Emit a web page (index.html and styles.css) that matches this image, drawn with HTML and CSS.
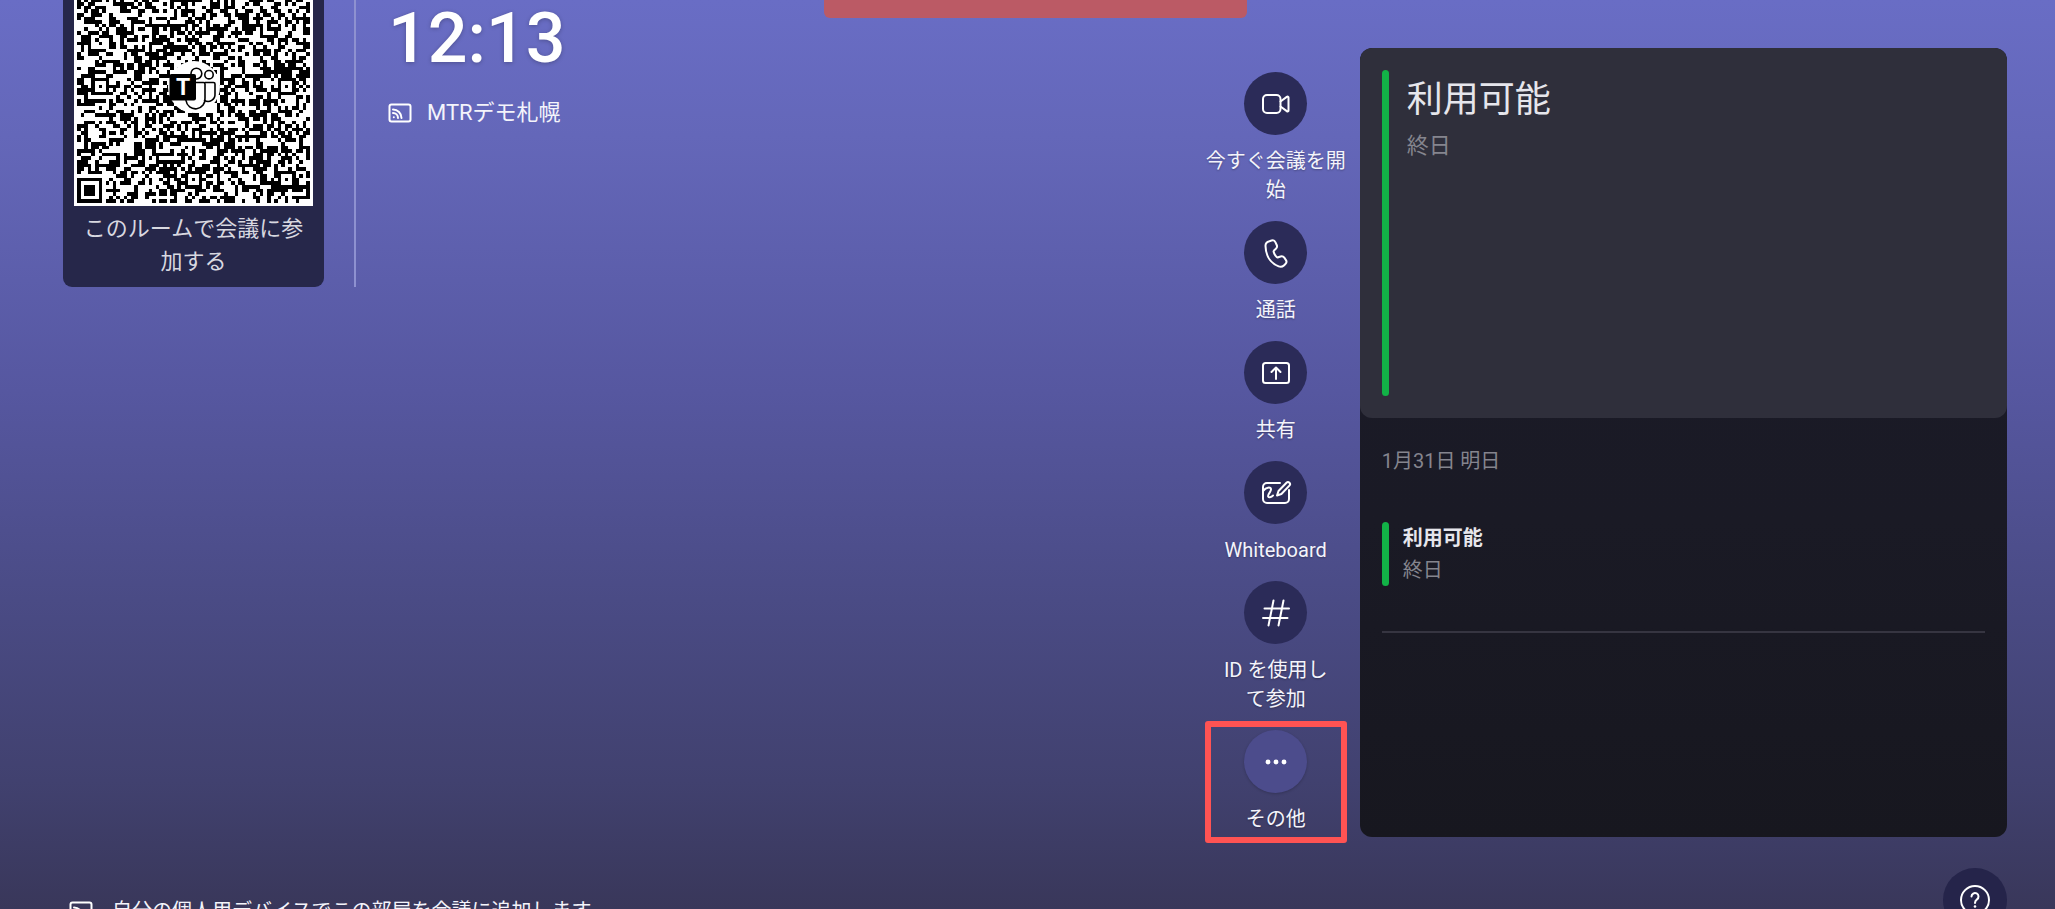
FILE: index.html
```html
<!DOCTYPE html>
<html lang="ja">
<head>
    <meta charset="UTF-8">
    <meta name="viewport" content="width=device-width, initial-scale=1.0">
    <title>MTRデモ札幌</title>
    <link rel="stylesheet" href="styles.css">
</head>
<body>

    <div class="alert-bar"></div>

    <main>
        <!-- Room info -->
        <section class="room">
            <div class="qr-card">
                <div class="qr-box">
                    <svg class="qr" id="qr" viewBox="0 0 65 65" shape-rendering="crispEdges"></svg>
                    <svg class="qr-logo" viewBox="-26 -26 52 52">
                        <circle r="26" fill="#fff"/>
                        <g fill="none" stroke="#000" stroke-width="1.6">
                            <circle cx="2.4" cy="-13.4" r="5.4"/>
                            <circle cx="15" cy="-12.3" r="4.2"/>
                            <path d="M2 -4.500H9.500Q11 -4.500 11 -3V11A9.500 9.500 0 0 1 -8 13.500"/>
                            <path d="M11 -4.500H19.500Q21 -4.500 21 -3V7A7 7 0 0 1 10.500 13.500"/>
                        </g>
                        <rect x="-24.500" y="-13" width="26.500" height="26.500" rx="2" fill="#000"/>
                        <text class="qr-logo-text" x="-11" y="8" text-anchor="middle">T</text>
                    </svg>
                </div>
                <p class="qr-caption">このルームで会議に参加する</p>
            </div>
            <div class="room-info">
                <h1 class="clock">12:13</h1>
                <p class="room-name">
                    <svg class="cast" viewBox="0 0 24 24">
                        <rect x="1.500" y="3.500" width="21" height="17" rx="2"/>
                        <path d="M5 8.500a8.500 8.500 0 0 1 8.500 8.500M5 12a5 5 0 0 1 5 5"/>
                        <circle cx="5.800" cy="16.200" r="1"/>
                    </svg>
                    <span>MTRデモ札幌</span>
                </p>
            </div>
        </section>

        <!-- Actions -->
        <nav class="actions">
            <button class="action">
                <span class="action-icon">
                    <svg viewBox="0 0 32 32">
                        <rect x="3" y="7" width="17.500" height="18" rx="4"/>
                        <path d="M20.500 13.500l6.300-4.600c.8-.6 1.700-.2 1.700.7v12.800c0 .9-.9 1.300-1.700.7l-6.300-4.600"/>
                    </svg>
                </span>
                <span class="action-label">今すぐ会議を開始</span>
            </button>
            <button class="action">
                <span class="action-icon">
                    <svg viewBox="0 0 32 32">
                        <path d="M9.400 4.200l2.200-.7c1.600-.5 3.200.3 3.900 1.800l1.200 2.700c.6 1.300.3 2.800-.8 3.800l-1.900 1.800c-.4.400-.5.900-.3 1.400.5 1.900 1.500 3.600 3 5 .4.400 1 .5 1.500.3l2.400-.8c1.400-.4 2.800 0 3.700 1.200l1.500 2.100c.9 1.300.8 3.100-.4 4.200l-1.500 1.400c-1.400 1.300-3.400 1.700-5.200 1-8.500-3.300-13-11.200-13.200-20.300-.1-2.200 1.300-4.200 3.900-4.900z"/>
                    </svg>
                </span>
                <span class="action-label">通話</span>
            </button>
            <button class="action">
                <span class="action-icon">
                    <svg viewBox="0 0 32 32">
                        <rect x="3" y="6" width="26" height="20" rx="2.500"/>
                        <path d="M16 22V11M11.500 15l4.500-4.500 4.500 4.500"/>
                    </svg>
                </span>
                <span class="action-label">共有</span>
            </button>
            <button class="action">
                <span class="action-icon">
                    <svg viewBox="0 0 32 32">
                        <path d="M20 6H7a4 4 0 0 0-4 4v12a4 4 0 0 0 4 4h18a4 4 0 0 0 4-4V13"/>
                        <path d="M3.500 13.500c2.500-3 7-4 7.500-1.500.5 2.500-3.800 5.500-2.800 7.500.9 1.700 3.300.3 4.800-1"/>
                        <path d="M17 18.500l1.500-4.500 8-8.300a2 2 0 0 1 2.900 2.900l-8 8.400z"/>
                    </svg>
                </span>
                <span class="action-label">Whiteboard</span>
            </button>
            <button class="action">
                <span class="action-icon">
                    <svg viewBox="0 0 32 32">
                        <path d="M13.500 3.500l-5 25M23.500 3.500l-5 25M4.500 11.500h24.500M3 21h24.500"/>
                    </svg>
                </span>
                <span class="action-label">ID を使用し<br>て参加</span>
            </button>
            <button class="action action-more">
                <span class="action-icon">
                    <svg viewBox="0 0 32 32">
                        <circle class="dot" cx="8" cy="16" r="2.400"/>
                        <circle class="dot" cx="16" cy="16" r="2.400"/>
                        <circle class="dot" cx="24" cy="16" r="2.400"/>
                    </svg>
                </span>
                <span class="action-label">その他</span>
            </button>
        </nav>

        <!-- Calendar -->
        <section class="calendar">
            <div class="today">
                <div class="today-text">
                    <h2>利用可能</h2>
                    <p>終日</p>
                </div>
            </div>
            <div class="upcoming">
                <p class="date">1月31日 明日</p>
                <div class="event">
                    <div class="event-text">
                        <h3>利用可能</h3>
                        <p>終日</p>
                    </div>
                </div>
                <hr>
            </div>
        </section>
    </main>

    <!-- Footer -->
    <footer>
        <p class="hint">
            <svg class="cast" viewBox="0 0 24 24">
                <rect x="1.500" y="3.500" width="21" height="17" rx="2"/>
                <path d="M5 8.500a8.500 8.500 0 0 1 8.500 8.500M5 12a5 5 0 0 1 5 5"/>
                <circle cx="5.800" cy="16.200" r="1"/>
            </svg>
            <span>自分の個人用デバイスでこの部屋を会議に追加します</span>
        </p>
        <button class="help" aria-label="ヘルプ">
            <svg viewBox="0 0 32 32">
                <circle cx="16" cy="16" r="14"/>
                <path d="M12.500 12.500a3.500 3.500 0 1 1 5.500 2.900c-1.300.9-2 1.600-2 3.600"/>
                <circle class="dot" cx="16" cy="22.500" r="1.300"/>
            </svg>
        </button>
    </footer>

    <script src="qr.js"></script>
</body>
</html>
```

FILE: styles.css
```css
/* General */
* {
    box-sizing: border-box;
}

body {
    font-family: Roboto, "Noto Sans CJK JP", sans-serif;
    color: #f4f4fb;
    margin: 0;
    height: 100vh;
    display: flex;
    flex-direction: column;
    overflow: hidden;
    background: linear-gradient(#696dc5 0%, #6467b9 15%, #5657a0 43%, #4a4b85 66%, #41416f 86%, #39375a 100%);
}

h1, h2, h3, p {
    margin: 0;
    font-weight: 400;
}

button {
    font-family: inherit;
    color: inherit;
    border: none;
    background: none;
    padding: 0;
    cursor: pointer;
}

svg {
    fill: none;
    stroke: #fff;
    stroke-width: 2;
    stroke-linecap: round;
    stroke-linejoin: round;
}

.dot {
    fill: #fff;
    stroke: none;
}

/* Red bar hanging from the top edge */
.alert-bar {
    position: absolute;
    top: 0;
    left: 824px;
    width: 423px;
    height: 18px;
    border-radius: 0 0 6px 6px;
    background: #bb5a65;
}

main {
    flex: 1;
    min-height: 0;
    display: grid;
    grid-template-columns: 1fr 142px 31.5vw;
    column-gap: 13px;
    padding: 0 48px 0 63px;
}

/* Room info */
.room {
    display: flex;
    align-items: flex-start;
}

.qr-card {
    width: 261px;
    margin-top: -44px;
    padding: 11px 11px 9px;
    border-radius: 9px;
    background: #26274a;
}

.qr-box {
    display: grid;
    place-items: center;
    padding: 3px;
    background: #fff;
}

.qr, .qr-logo {
    grid-area: 1 / 1;
    display: block;
    stroke: none;
}

.qr {
    width: 100%;
    fill: #000;
}

.qr-logo {
    width: 52px;
    height: 52px;
}

.qr-logo-text {
    font-size: 23px;
    font-weight: 700;
    fill: #fff;
}

.qr-caption {
    padding-top: 6px;
    font-size: 22px;
    line-height: 33px;
    text-align: center;
    color: #d8d8e0;
}

.room-info {
    margin-left: 30px;
    padding-left: 32px;
    height: 287px;
    border-left: 2px solid #8e91d0;
}

.clock {
    font-size: 70px;
    font-weight: 500;
    line-height: 76px;
    color: #fff;
    text-shadow: 0 1px 4px rgba(0, 0, 0, 0.25);
}

.room-name {
    display: flex;
    align-items: center;
    gap: 15px;
    margin-top: 22px;
    font-size: 22px;
    line-height: 30px;
}

.cast {
    width: 24px;
    height: 24px;
}

.cast circle {
    fill: #fff;
    stroke: none;
}

/* Actions */
.actions {
    display: flex;
    flex-direction: column;
    gap: 16px;
    padding-top: 72px;
}

.action {
    position: relative;
    display: flex;
    flex-direction: column;
    align-items: center;
    gap: 12px;
    font-size: 20px;
    line-height: 29px;
}

.action-icon {
    display: flex;
    align-items: center;
    justify-content: center;
    width: 63px;
    height: 63px;
    border-radius: 50%;
    background: #2b2b58;
}

.action-icon svg {
    width: 32px;
    height: 32px;
}

.action-label {
    text-shadow: 0 1px 2px rgba(0, 0, 0, 0.3);
}

.action-more .action-icon {
    background: #4c4c8c;
    box-shadow: 0 1px 3px rgba(0, 0, 0, 0.2);
}

.action-more::after {
    content: "";
    position: absolute;
    inset: -9px 0;
    border: 6px solid #ff5353;
    border-radius: 3px;
}

/* Calendar */
.calendar {
    margin-top: 48px;
    border-radius: 12px;
    overflow: hidden;
    background: linear-gradient(#1b1b29, #1a1a25 60%, #17171f);
}

.today {
    display: flex;
    height: 370px;
    padding: 22px;
    border-radius: 12px;
    background: #2f2f3b;
}

.today::before,
.event::before {
    content: "";
    width: 7px;
    border-radius: 4px;
    background: #12b247;
}

.today-text {
    padding-left: 18px;
}

.today h2 {
    font-size: 36px;
    line-height: 60px;
    color: #e6e6ec;
}

.today p {
    font-size: 22px;
    line-height: 32px;
    color: #85858e;
}

.upcoming {
    padding: 28px 22px;
    font-size: 20px;
    color: #85858e;
}

.date {
    line-height: 30px;
}

.event {
    display: flex;
    margin-top: 46px;
    line-height: 32px;
}

.event-text {
    padding-left: 14px;
}

.event h3 {
    font-size: 20px;
    font-weight: 700;
    color: #e6e6ec;
}

.upcoming hr {
    margin: 45px 0 0;
    border: none;
    border-top: 2px solid #363541;
}

/* Footer, its lower part runs off the window */
footer {
    display: flex;
    flex: 0 0 72px;
    min-height: 0;
    align-items: flex-start;
    justify-content: space-between;
    padding: 31px 48px 0 69px;
}

.hint {
    display: flex;
    align-items: center;
    gap: 19px;
    padding-top: 22px;
    font-size: 20px;
    line-height: 42px;
}

.help {
    display: flex;
    align-items: center;
    justify-content: center;
    width: 64px;
    height: 64px;
    border-radius: 50%;
    background: #25244a;
}

.help svg {
    width: 32px;
    height: 32px;
}
```

FILE: qr.js
```js
// Draws the 65 x 65 join code into the #qr svg
const SIZE = 65;
const grid = [];
let seed = 20240131;

function nextBit() {
    seed = (seed * 1103515245 + 12345) % 2147483648;
    return (seed / 2147483648) < 0.5;
}

for (let y = 0; y < SIZE; y++) {
    grid.push([]);
    for (let x = 0; x < SIZE; x++) {
        grid[y].push(nextBit());
    }
}

// Square rings around a centre, light rings are listed
function drawRings(cx, cy, radius, light) {
    for (let y = -radius; y <= radius; y++) {
        for (let x = -radius; x <= radius; x++) {
            const row = grid[cy + y];
            if (row && cx + x >= 0 && cx + x < SIZE) {
                row[cx + x] = !light.includes(Math.max(Math.abs(x), Math.abs(y)));
            }
        }
    }
}

// Timing lines
for (let i = 8; i < SIZE - 8; i++) {
    grid[6][i] = i % 2 === 0;
    grid[i][6] = i % 2 === 0;
}

// Alignment marks
[[32, 6], [6, 32], [32, 32], [58, 32], [32, 58], [58, 58]].forEach(([x, y]) => drawRings(x, y, 2, [1]));

// Corner marks
[[3, 3], [61, 3], [3, 61]].forEach(([x, y]) => drawRings(x, y, 4, [2, 4]));

let d = '';
grid.forEach((row, y) => {
    row.forEach((dark, x) => {
        if (dark) {
            d += `M${x} ${y}h1v1h-1z`;
        }
    });
});

const path = document.createElementNS('http://www.w3.org/2000/svg', 'path');
path.setAttribute('d', d);
document.getElementById('qr').appendChild(path);
```
